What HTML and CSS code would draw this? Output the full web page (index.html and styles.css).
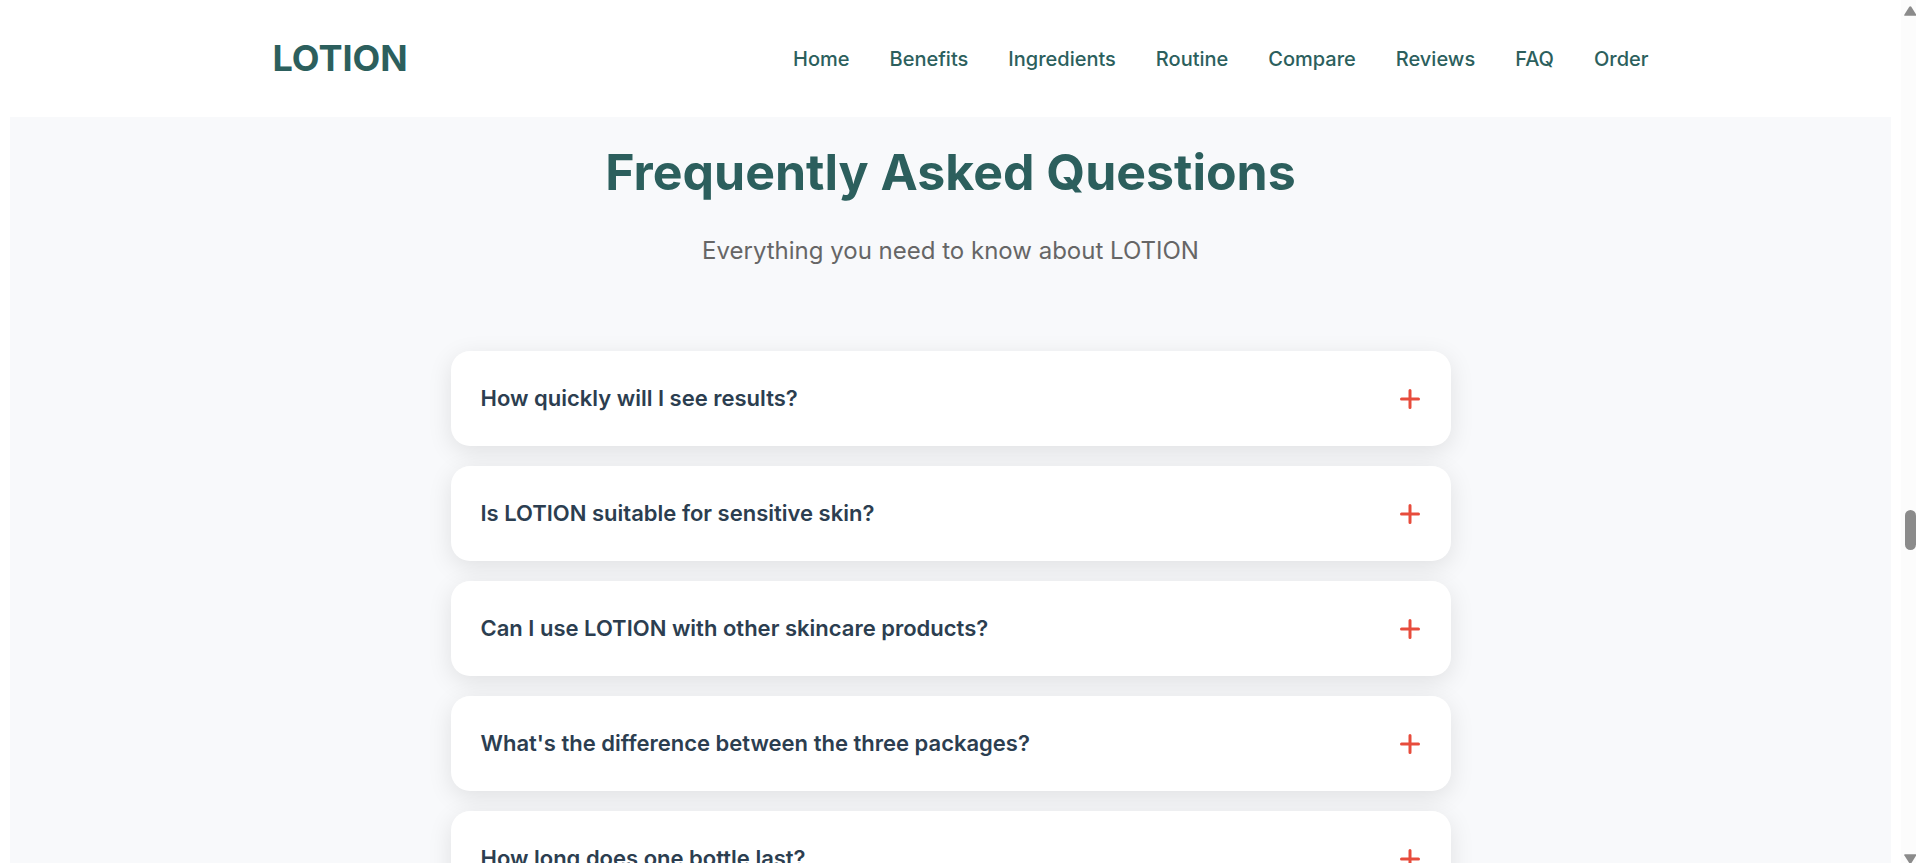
FILE: index.html
```html
<!DOCTYPE html>
<html lang="en">
<head>
<meta charset="utf-8">
<title>LOTION</title>
<link rel="stylesheet" href="styles.css">
</head>
<body>
<div class="page">
  <header class="header">
    <div class="header-inner">
      <a class="logo" href="#home">LOTION</a>
      <nav class="nav">
        <a href="#home">Home</a>
        <a href="#benefits">Benefits</a>
        <a href="#ingredients">Ingredients</a>
        <a href="#routine">Routine</a>
        <a href="#compare">Compare</a>
        <a href="#reviews">Reviews</a>
        <a href="#faq">FAQ</a>
        <a href="#order">Order</a>
      </nav>
    </div>
  </header>
  <main class="faq" id="faq">
    <h1 class="faq-title">Frequently Asked Questions</h1>
    <p class="faq-subtitle">Everything you need to know about LOTION</p>
    <div class="faq-list">
      <button class="faq-item" type="button" aria-expanded="false">How quickly will I see results?
        <svg class="plus" viewBox="0 0 22 22" aria-hidden="true"><path d="M11 2.5v17M2.5 11h17"/></svg></button>
      <button class="faq-item" type="button" aria-expanded="false">Is LOTION suitable for sensitive skin?
        <svg class="plus" viewBox="0 0 22 22" aria-hidden="true"><path d="M11 2.5v17M2.5 11h17"/></svg></button>
      <button class="faq-item" type="button" aria-expanded="false">Can I use LOTION with other skincare products?
        <svg class="plus" viewBox="0 0 22 22" aria-hidden="true"><path d="M11 2.5v17M2.5 11h17"/></svg></button>
      <button class="faq-item" type="button" aria-expanded="false">What's the difference between the three packages?
        <svg class="plus" viewBox="0 0 22 22" aria-hidden="true"><path d="M11 2.5v17M2.5 11h17"/></svg></button>
      <button class="faq-item" type="button" aria-expanded="false">How long does one bottle last?
        <svg class="plus" viewBox="0 0 22 22" aria-hidden="true"><path d="M11 2.5v17M2.5 11h17"/></svg></button>
    </div>
  </main>
</div>
<div class="scrollbar" aria-hidden="true">
  <svg class="scroll-arrow" viewBox="0 0 12 10"><path d="M.3 8.8L5.3.8Q6.3-.5 7.3.8L12.3 8.8Q12.6 9.8 11.5 9.8H1Q-.1 9.8.3 8.8Z"/></svg>
  <div class="scroll-thumb"></div>
  <svg class="scroll-arrow" viewBox="0 0 12 10"><path d="M.3 1.2L5.3 9.2Q6.3 10.5 7.3 9.2L12.3 1.2Q12.6.2 11.5.2H1Q-.1.2.3 1.2Z"/></svg>
</div>
</body>
</html>
```
FILE: styles.css
```css
* {
  box-sizing: border-box;
}

body {
  display: flex;
  height: 100vh;
  margin: 0;
  overflow: hidden;
  background: #fff;
  font-family: Inter, "Liberation Sans", sans-serif;
}

.page {
  display: flex;
  flex: 1;
  flex-direction: column;
  min-width: 0;
  overflow: hidden;
}

.header {
  padding: 30px 20px;
  background: #fff;
}

.header-inner {
  display: flex;
  align-items: center;
  justify-content: space-between;
  max-width: 1400px;
  min-height: 57px;
  margin: 0 auto;
  padding: 0 2px 0 22px;
}

.logo {
  color: #2c5f5d;
  font-size: 36px;
  font-weight: 700;
  line-height: 44px;
  padding-bottom: 2px;
  text-decoration: none;
}

.nav {
  display: flex;
  gap: 40px;
}

.nav a {
  color: #2c5f5d;
  font-size: 20px;
  font-weight: 500;
  text-decoration: none;
}

.faq {
  flex: 1 0 auto;
  margin: 0 10px;
  padding: 25px 20px 100px;
  background: #f8f9fb;
  text-align: center;
}

.faq-title {
  margin: 0 0 25px;
  color: #2c5f5d;
  font-size: 50px;
  font-weight: 700;
  line-height: 60px;
}

.faq-subtitle {
  margin: 0 0 76px;
  color: #666;
  font-size: 24px;
  line-height: 48px;
}

.faq-list {
  display: flex;
  flex-direction: column;
  gap: 20px;
  max-width: 1000px;
  margin: 0 auto;
}

.faq-item {
  display: flex;
  align-items: center;
  justify-content: space-between;
  padding: 30px;
  border: 0;
  border-radius: 19px;
  background: #fff;
  box-shadow: 0 6px 25px rgba(0, 0, 0, 0.1);
  color: #2c3e50;
  font-family: inherit;
  font-size: 22px;
  font-weight: 600;
  line-height: 35px;
  text-align: left;
  cursor: pointer;
}

.plus {
  flex: none;
  width: 22px;
  height: 22px;
  fill: none;
  stroke: #e74c3c;
  stroke-width: 3;
  stroke-linecap: round;
}

.scrollbar {
  display: grid;
  flex: none;
  grid-template-rows: 10px 494fr 40px 304fr 9px;
  justify-items: end;
  width: 15px;
  padding: 6px 0 0;
  background: #fcfcfc;
}

.scroll-arrow {
  width: 12px;
  height: 10px;
  fill: #8b8b8b;
}

.scroll-thumb {
  grid-row: 3;
  width: 11px;
  border-radius: 6px;
  background: #8b8b8b;
}

.scroll-arrow:last-child {
  grid-row: 5;
}
```
